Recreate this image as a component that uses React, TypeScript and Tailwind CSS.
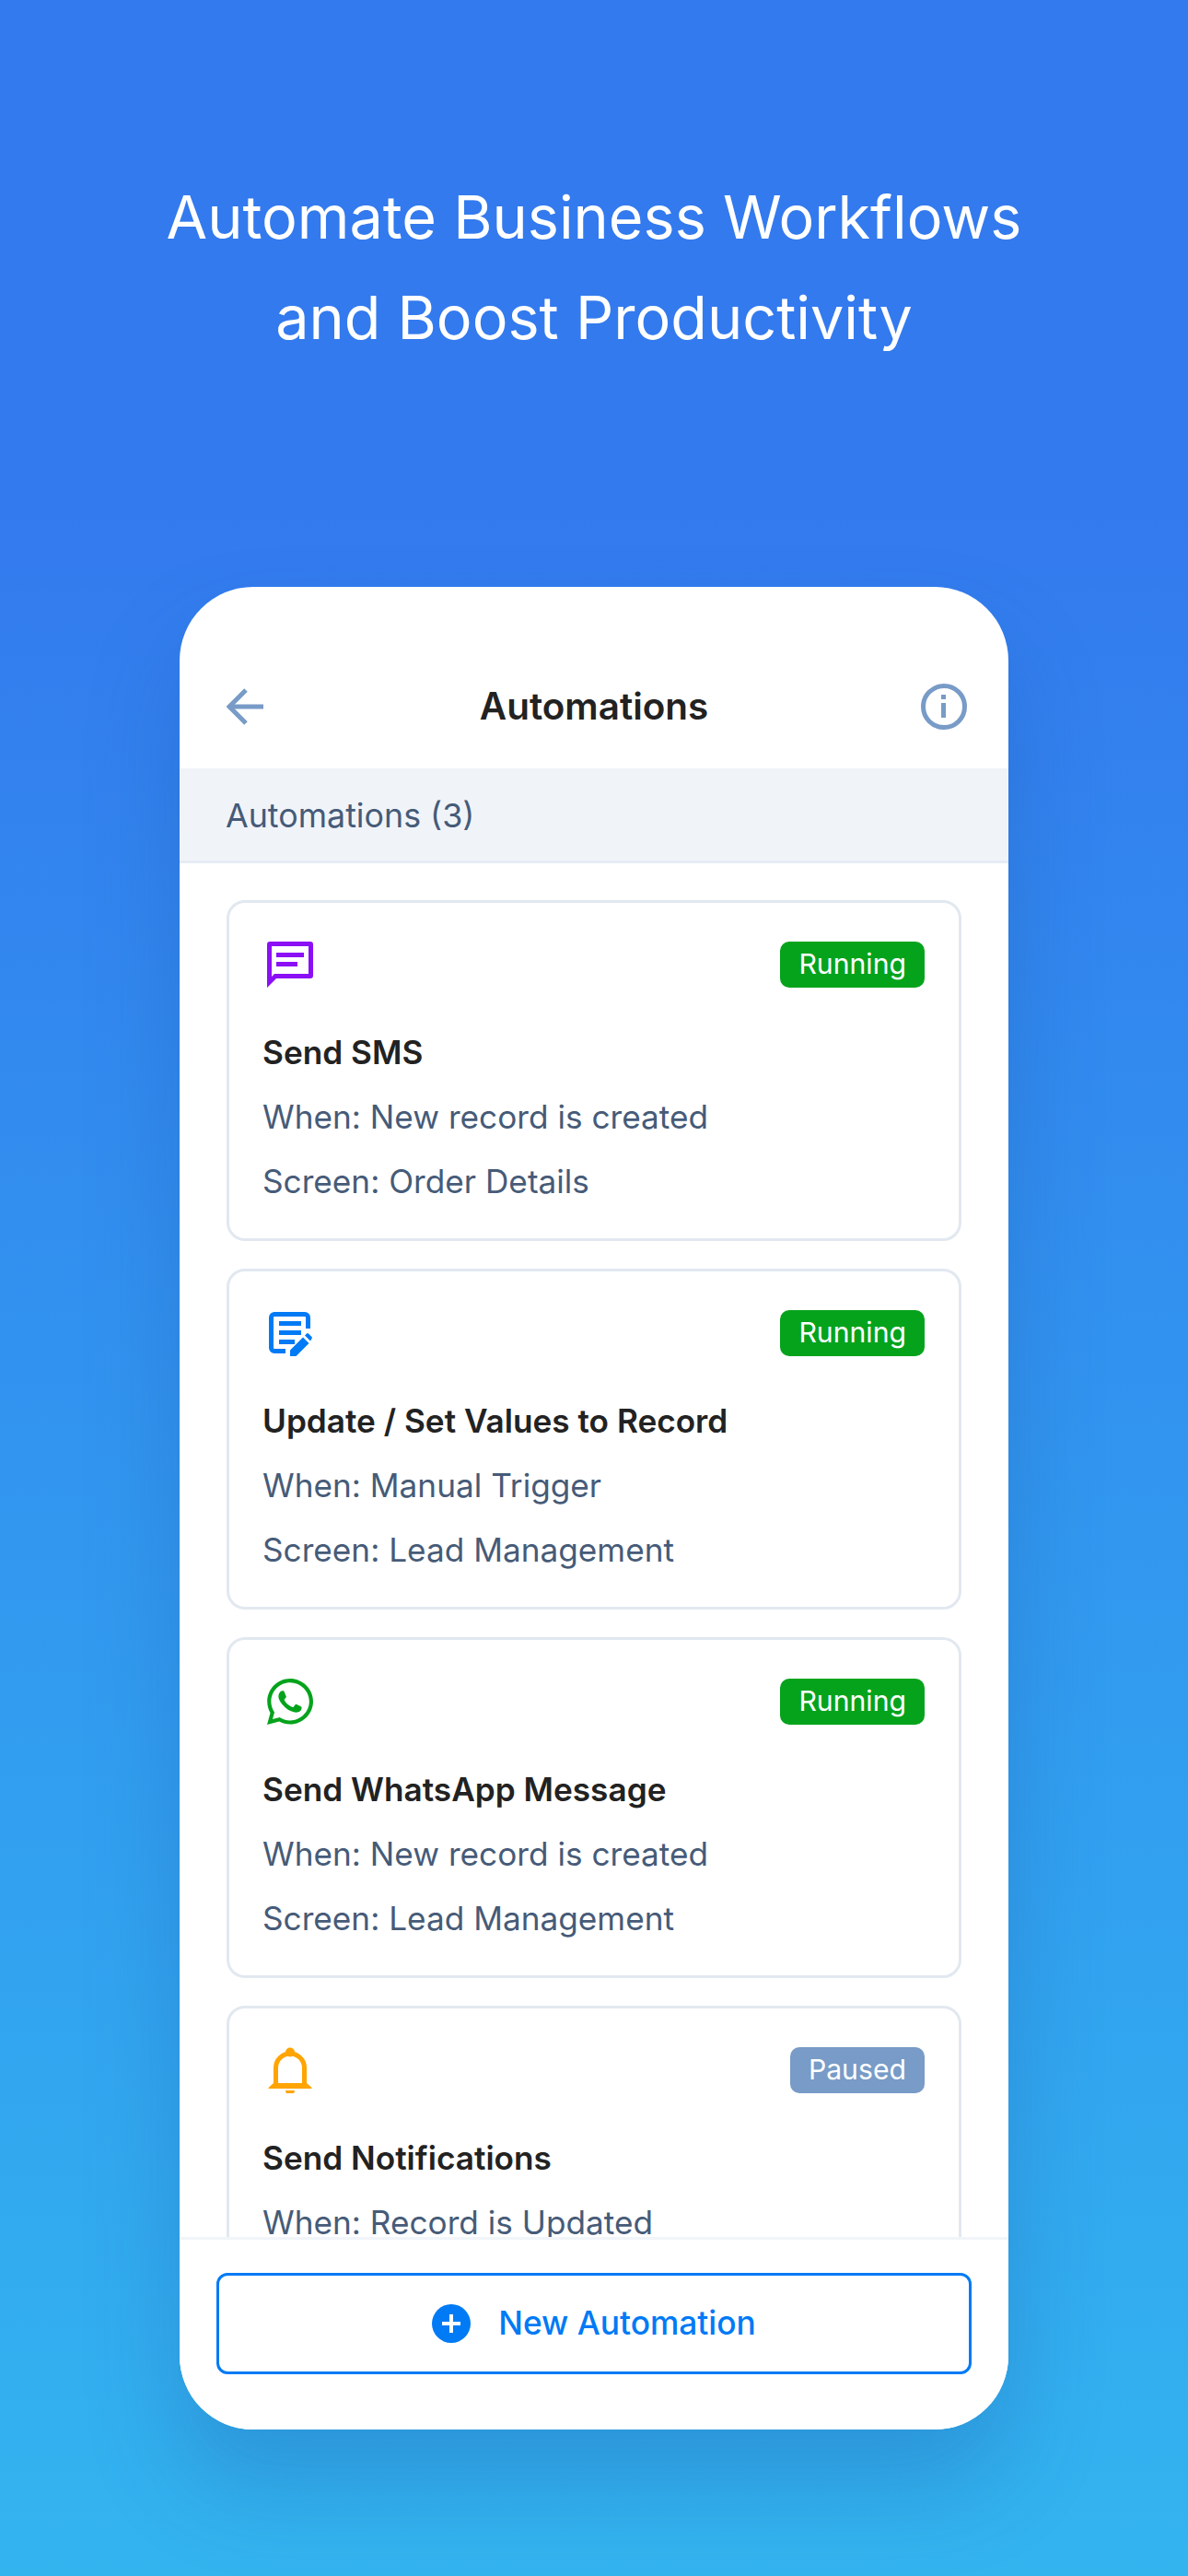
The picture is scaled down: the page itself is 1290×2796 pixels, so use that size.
import React from 'react'
import { FaWhatsapp } from 'react-icons/fa'

function SmsIcon() {
  return (
    <svg viewBox="0 0 50 50" className="h-[50px] w-[50px]" fill="#8b0ff5">
      <path
        fillRule="evenodd"
        d="M3 0H47a3 3 0 0 1 3 3V37a3 3 0 0 1-3 3H10L0 50V3A3 3 0 0 1 3 0ZM5 5V38L8 35H45V5Z"
      />
      <rect x="10" y="12" width="30" height="5" />
      <rect x="10" y="22" width="23" height="5" />
    </svg>
  )
}

function EditIcon() {
  return (
    <svg viewBox="0 0 50 50" className="h-[50px] w-[50px]" fill="#007af5">
      <path
        d="M20 44.500H8a3.500 3.500 0 0 1-3.500-3.500V8A3.500 3.500 0 0 1 8 4.500H41A3.500 3.500 0 0 1 44.500 8V20"
        fill="none"
        stroke="#007af5"
        strokeWidth="5"
      />
      <rect x="13" y="12" width="24" height="5" />
      <rect x="13" y="22" width="24" height="5" />
      <rect x="13" y="32" width="17" height="5" />
      <path d="M25 50V43.500L39 29.500L45.500 36L31.500 50Z" />
      <path d="M41 27.500L43 25.500a1.500 1.500 0 0 1 2 0L48.500 29a1.500 1.500 0 0 1 0 2L47 33.500Z" />
    </svg>
  )
}

function BellIcon() {
  return (
    <svg viewBox="0 0 50 50" className="h-[50px] w-[50px]" fill="#ffa400">
      <circle cx="25" cy="5.500" r="5" />
      <path d="M9.500 42V22.500a15.500 15.500 0 0 1 31 0V42" fill="none" stroke="#ffa400" strokeWidth="5" />
      <path d="M1.500 45V44L7 39H43L48.500 44V45Z" />
      <path d="M20 47H30A5 5 0 0 1 20 47Z" />
    </svg>
  )
}

const cards = [
  { icon: <SmsIcon />, title: 'Send SMS', when: 'New record is created', screen: 'Order Details', paused: false },
  { icon: <EditIcon />, title: 'Update / Set Values to Record', when: 'Manual Trigger', screen: 'Lead Management', paused: false },
  {
    icon: <FaWhatsapp viewBox="0 32 448 448" className="h-[50px] w-[50px]" color="#05a31c" />,
    title: 'Send WhatsApp Message',
    when: 'New record is created',
    screen: 'Lead Management',
    paused: false,
  },
  { icon: <BellIcon />, title: 'Send Notifications', when: 'Record is Updated', screen: '', paused: true },
]

export default function App() {
  return (
    <div className="flex h-[2796px] w-[1290px] flex-col items-center overflow-hidden bg-gradient-to-b from-[#337aee] from-20% to-[#33b4ef] font-['Inter',sans-serif]">
      <h1 className="mt-[181px] text-center text-[64.7px] leading-[109px] font-normal text-white">
        Automate Business Workflows
        <br />
        and Boost Productivity
      </h1>

      <div className="mt-[238px] flex h-[2000px] w-[900px] flex-col overflow-hidden rounded-[80px] bg-white shadow-[0_60px_100px_rgba(25,70,150,0.25)]">
        <div className="flex h-[197px] shrink-0 items-start justify-between pt-[100px] pr-[45px] pl-[51px]">
          <div className="flex h-[60px] w-11 items-center">
            <svg viewBox="0 0 40 40" className="h-10 w-10" fill="none" stroke="#789bc7" strokeWidth="5">
              <path d="M40 20H4" />
              <path d="M21 2L3 20L21 38" />
            </svg>
          </div>
          <h2 className="text-[40.400px] leading-[60px] font-semibold text-[#222222]">Automations</h2>
          <div className="flex h-[60px] items-center">
            <svg viewBox="0 0 50 50" className="h-[50px] w-[50px]" fill="#789bc7">
              <circle cx="25" cy="25" r="22.500" fill="none" stroke="#789bc7" strokeWidth="5" />
              <rect x="22" y="12" width="5" height="5" />
              <rect x="22" y="21" width="5" height="16" />
            </svg>
          </div>
        </div>

        <div className="flex h-[103px] shrink-0 items-center border-b-[3px] border-[#e6ecf4] bg-[#f0f4f9] pt-1 pl-[50px] text-[35.800px] text-[#465b78]">
          Automations (3)
        </div>

        <div className="flex min-h-0 flex-1 flex-col gap-[30px] overflow-hidden px-[51px] pt-10">
          {cards.map((card) => (
            <div key={card.title} className="shrink-0 rounded-[20px] border-[3px] border-[#e2e8f0] pt-[42px] pr-[37px] pb-[27px] pl-9">
              <div className="flex items-start justify-between">
                <div className="ml-[5px]">{card.icon}</div>
                <span
                  className={`flex h-[50px] items-center rounded-[10px] px-5 text-[30.200px] text-white ${
                    card.paused ? 'bg-[#789bc7]' : 'bg-[#05a31c]'
                  }`}
                >
                  {card.paused ? 'Paused' : 'Running'}
                </span>
              </div>
              <div className="mt-[35px] text-[35.200px] leading-[70px] font-semibold text-[#222222]">{card.title}</div>
              <div className="text-[35.200px] leading-[70px] text-[#465b78]">When: {card.when}</div>
              {card.screen && <div className="text-[35.200px] leading-[70px] text-[#465b78]">Screen: {card.screen}</div>}
            </div>
          ))}
        </div>

        <div className="z-10 h-[209px] shrink-0 border-t-[3px] border-[#f1f5f9] bg-white px-10 pt-9">
          <button className="flex h-[110px] w-full items-center justify-center gap-[30px] rounded-xl border-[3px] border-[#007af5] text-[35.300px] font-medium text-[#007af5]">
            <svg viewBox="0 0 42 42" className="h-[42px] w-[42px]">
              <circle cx="21" cy="21" r="21" fill="#007af5" />
              <path d="M21 11V31M11 21H31" stroke="white" strokeWidth="4" />
            </svg>
            New Automation
          </button>
        </div>
      </div>
    </div>
  )
}
